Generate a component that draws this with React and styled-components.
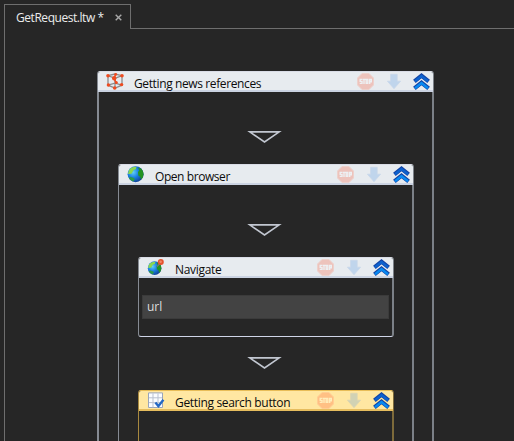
import React from 'react';
import styled, { createGlobalStyle } from 'styled-components';

const Global = createGlobalStyle`
  * { box-sizing: border-box; }
  body { margin: 0; background: #262626; overflow: hidden; font-family: "Open Sans", "Noto Sans", sans-serif; font-size: 12px; }
  svg { display: block; flex: none; }
`;

const Window = styled.div`
  width: 514px;
  height: 441px;
  padding: 4px 0 0 4px;
  overflow: hidden;
  display: flex;
  flex-direction: column;
  background: #262626;
`;
const TabBar = styled.div`
  display: flex;
  height: 25px;
  flex: none;
`;
const Tab = styled.div`
  width: 127px;
  border: 1px solid #6e6e6e;
  border-bottom: 0;
  display: flex;
  align-items: center;
  padding: 1px 8px 0 11px;
  color: #ececec;
  justify-content: space-between;
`;
const TabRest = styled.div`
  flex: 1;
  border-bottom: 1px solid #6e6e6e;
`;
const Canvas = styled.div`
  flex: 1;
  border-left: 1px solid #6e6e6e;
  padding: 42px 80px 0 92px;
`;
const Label = styled.span`
  white-space: nowrap;
  line-height: 16px;
  letter-spacing: ${(p) => p.$track || 0}px;
`;
const Header = styled.header`
  height: 20px;
  display: flex;
  align-items: flex-start;
  margin-right: -1px;
  padding: 1px 3px 0 8px;
  border-radius: 2px 2px 0 0;
  background: ${(p) => (p.$selected ? '#ffe7a2' : '#e7ebef')};
  border-bottom: 2px solid ${(p) => (p.$selected ? '#e6bd5e' : '#cbd3e2')};
  color: #0c0c0c;
`;
const Panel = styled.section`
  border-style: solid;
  border-width: 1px 2px 1px ${(p) => (p.$outer ? 2 : 1)}px;
  border-color: ${(p) => (p.$selected ? '#e8bd58 #7d6a3a #e8bd58 #a8893f' : '#d9dce6 #7b8087 #d0d5e8 #868b93')};
  border-radius: 3px;
  height: ${(p) => p.$height}px;

  > ${Header} {
    margin-left: ${(p) => (p.$outer ? -1 : 0)}px;
  }
`;
const Title = styled.div`
  flex: 1;
  padding: 3px 0 0 10px;
  line-height: 16px;
  display: flex;
`;
const Actions = styled.div`
  display: flex;
  gap: 12px;
`;
const Faded = styled.div`
  opacity: 0.27;
  margin-right: ${(p) => p.$gap || 0}px;
`;
const Body = styled.div`
  padding: 0 18px 0 19px;
`;
const Connector = styled.div`
  height: ${(p) => p.$height}px;
  padding: ${(p) => p.$top}px 3px 0 0;
  display: flex;
  justify-content: center;
`;
const FieldArea = styled.div`
  padding: 17px 3px 0;
`;
const Field = styled.div`
  height: 24px;
  background: #434343;
  border: 1px solid #3b3b3b;
  color: #dedede;
  padding: 2px 4px;
`;

const CloseIcon = () => (
  <svg width="7" height="7" viewBox="0 0 7 7">
    <path d="M.7.7 6.3 6.3M6.3.7.7 6.3" stroke="#a8a8a8" strokeWidth="1.4" />
  </svg>
);
const DownTriangle = () => (
  <svg width="35" height="13" viewBox="0 0 35 13">
    <path d="M2.8.9h29.4L17.5 11z" fill="none" stroke="#c2c7d1" strokeWidth="1.6" />
  </svg>
);
const StopIcon = () => (
  <svg width="17" height="17" viewBox="0 0 17 17">
    <path d="M5 .5h7L16.5 5v7L12 16.5H5L.5 12V5z" fill="#ff5a36" stroke="#ff8e70" />
    <g fill="none" stroke="#fff" strokeWidth="1.4">
      <path d="M5 6.4H3.2v2H5v2H2.7M5.4 6.4h3.2M7 6.5v4.6M9.2 6.4h1.6v4H9.2zM12.7 11.1V6.4h1.6v2.3h-1.6" />
    </g>
  </svg>
);
const StepIcon = () => (
  <svg width="14" height="17" viewBox="0 0 14 17">
    <path d="M3.6 1.3h6.6v6.9h3.4L7 15.7.4 8.2h3.2z" fill="#5a9be6" stroke="#7aa6dd" strokeWidth=".8" />
  </svg>
);
const CollapseIcon = () => (
  <svg width="17" height="17" viewBox="0 0 17 17">
    <g fill="none" strokeLinejoin="miter">
      <path d="M1.4 8.3 8.5 2.7l7.1 5.6M1.4 15.3 8.5 9.7l7.1 5.6" stroke="#1444a4" strokeWidth="4.2" />
      <path d="M2 8.3 8.5 3.1 15 8.3" stroke="#0d62cf" strokeWidth="2.4" />
      <path d="M2 15.2 8.5 10l6.5 5.2" stroke="#088af2" strokeWidth="2.4" />
    </g>
  </svg>
);
const GraphIcon = () => (
  <svg width="18" height="17" viewBox="0 0 18 17">
    <path d="M2 2.7 9 1l7 1.7v9.5L9 15l-7-2.8zM2 2.7l7 2.7 7-2.7M9 5.2V15M2 12.2l7-2 7 2" fill="none" stroke="#8c8c8c" strokeWidth="1.3" />
    <path d="m9.5 1.5-1.4 3.9 2.2 5" fill="none" stroke="#ee4e20" strokeWidth="1.5" />
    <g fill="#ef4b20">
      <circle cx="2" cy="2.7" r="1.8" /><circle cx="9.7" cy="1.4" r="1.4" />
      <circle cx="16" cy="2.7" r="1.8" /><circle cx="8.2" cy="5.2" r="2.2" /><circle cx="2.4" cy="12" r="1.7" />
      <circle cx="10.3" cy="9.6" r="1.5" /><circle cx="15.6" cy="11.6" r="1.7" /><circle cx="8.7" cy="15" r="1.8" />
    </g>
  </svg>
);
const Globe = ({ id }) => (
  <g>
    <radialGradient id={id} cx="35%" cy="38%" r="68%">
      <stop offset="0" stopColor="#61cff8" /><stop offset=".5" stopColor="#197ee0" /><stop offset="1" stopColor="#103f92" />
    </radialGradient>
    <circle cx="8.6" cy="8.2" r="8" fill={`url(#${id})`} />
    <path d="M2 4C4 1.3 7 .5 9.5.8L9 3 6.5 4.3 4.5 7.8 1 8z" fill="#8bd750" />
    <path d="m11.2 1.7 2.1.2c2 1.3 3.2 3.7 3.2 6.3-.1 2-1 4.2-2.3 5.3l-1.1-2.8-1.8-1.2L11 6l1.2-1.4z" fill="#239322" />
    <path d="m3.8 11 3.3 1.1.6 1.3-1.4 2C4 14.7 2.6 13.4 1.8 11.8z" fill="#2c9a4a" />
  </g>
);
const GlobeIcon = () => (
  <svg width="18" height="17" viewBox="0 0 18 17"><Globe id="globe" /></svg>
);
const NavigateIcon = () => (
  <svg width="18" height="17" viewBox="0 0 18 17">
    <g transform="translate(.3 2.2) scale(.85)"><Globe id="globe-small" /></g>
    <path d="m10 7.5 3-3" stroke="#777" strokeWidth="1.3" />
    <circle cx="13.8" cy="3.1" r="3" fill="#e5522f" /><circle cx="13.6" cy="2.8" r="1.3" fill="#f08a68" />
  </svg>
);
const TableIcon = () => (
  <svg width="18" height="17" viewBox="0 0 18 17">
    <path d="M1.5.9h14v14.6h-14z" fill="#fafcff" stroke="#9aa5ba" />
    <path d="M6 1.4v14M11 1.4v14M2 5.8h13M2 10.6h13" stroke="#b9c1d0" />
    <path d="m8.4 10.6 3 3.6 5-6.4" fill="none" stroke="#2468c4" strokeWidth="2.4" />
  </svg>
);

function PanelHeader({ icon, title, track, selected }) {
  return (
    <Header $selected={selected}>
      {icon}
      <Title><Label $track={track}>{title}</Label></Title>
      <Actions>
        <Faded $gap={1}><StopIcon /></Faded>
        <Faded><StepIcon /></Faded>
        <CollapseIcon />
      </Actions>
    </Header>
  );
}

export default function App() {
  return (
    <>
      <Global />
      <Window>
        <TabBar>
          <Tab><Label $track={-0.45}>GetRequest.ltw *</Label><CloseIcon /></Tab>
          <TabRest />
        </TabBar>
        <Canvas>
          <Panel $height={420} $outer>
            <PanelHeader icon={<GraphIcon />} title="Getting news references" track={-0.38} />
            <Body>
              <Connector $height={72} $top={39}><DownTriangle /></Connector>
              <Panel $height={350}>
                <PanelHeader icon={<GlobeIcon />} title="Open browser" track={-0.43} />
                <Body>
                  <Connector $height={72} $top={39}><DownTriangle /></Connector>
                  <Panel $height={80}>
                    <PanelHeader icon={<NavigateIcon />} title="Navigate" track={-0.3} />
                    <FieldArea><Field><Label>url</Label></Field></FieldArea>
                  </Panel>
                  <Connector $height={53} $top={20}><DownTriangle /></Connector>
                  <Panel $height={100} $selected>
                    <PanelHeader icon={<TableIcon />} title="Getting search button" track={-0.33} selected />
                  </Panel>
                </Body>
              </Panel>
            </Body>
          </Panel>
        </Canvas>
      </Window>
    </>
  );
}
